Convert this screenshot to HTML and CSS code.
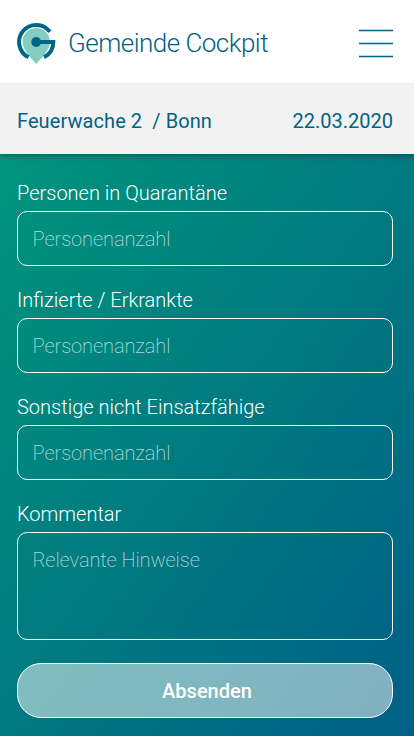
FILE: index.html
```html
<!DOCTYPE html>
<html lang="de">
<head>
  <meta charset="UTF-8">
  <meta name="viewport" content="width=device-width, initial-scale=1.0">
  <title>Gemeinde Cockpit</title>
  <link rel="stylesheet" href="styles.css">
</head>

<body>
<div class="mainscreen">
    <header class="topbar">
      <div class="brand">
        <svg class="logo" width="40" height="42" viewBox="0 0 40 42">
          <path d="M20.200 42 C17.500 38.500 14.500 36 12 32.500 C9 28.500 6.500 24.500 6.500 19.800 A13.700 13.700 0 0 1 33.900 19.800 C33.900 24.500 31.400 28.500 28.400 32.500 C25.900 36 22.900 38.500 20.200 42 Z" fill="#84cdc0"/>
          <path d="M33.900 9.800 A17.100 17.100 0 1 0 12.500 35.300" fill="none" stroke="#006586" stroke-width="4"/>
          <path d="M20.200 20 H37.300 A17.100 17.100 0 0 1 28 35.300" fill="none" stroke="#006586" stroke-width="4"/>
          <circle cx="20.200" cy="20" r="4.900" fill="#006586"/>
        </svg>
        <span class="brandname">Gemeinde Cockpit</span>
      </div>
      <div class="menu">
        <span></span>
        <span></span>
        <span></span>
      </div>
    </header>

    <div class="station">
      <span class="place">Feuerwache 2&nbsp; / Bonn</span>
      <span class="date">22.03.2020</span>
    </div>

    <form class="report">
      <label for="quarantine">Personen in Quarantäne</label>
      <input type="text" class="inputbox" id="quarantine" placeholder="Personenanzahl">
      <label for="infected">Infizierte / Erkrankte</label>
      <input type="text" class="inputbox" id="infected" placeholder="Personenanzahl">
      <label for="other">Sonstige nicht Einsatzfähige</label>
      <input type="text" class="inputbox" id="other" placeholder="Personenanzahl">
      <label for="comment">Kommentar</label>
      <textarea class="inputbox comment" id="comment" placeholder="Relevante Hinweise"></textarea>
      <button type="button" class="button">Absenden</button>
    </form>
</div>
</body>
</html>
```
FILE: styles.css
```css
* {
  box-sizing: border-box;
}

body {
  font-family: Roboto, sans-serif;
  margin: 0;
}

.mainscreen {
  min-height: 100vh;
  display: flex;
  flex-direction: column;
  background: #fff;
  color: #006283;
}

.topbar {
  height: 82px;
  padding: 0 21px 0 16px;
  display: flex;
  align-items: center;
  justify-content: space-between;
}

.brand {
  display: flex;
  align-items: center;
  gap: 12px;
  padding-top: 4px;
}

.logo {
  display: block;
}

.brandname {
  font-size: 26px;
  font-weight: 300;
  letter-spacing: -0.52px;
  line-height: 32px;
  white-space: nowrap;
}

.menu {
  width: 34px;
  display: flex;
  flex-direction: column;
  gap: 10px;
  padding-top: 5px;
}

.menu span {
  height: 3px;
  background: #006586;
  border: solid #b9d9dc;
  border-width: 1px 0;
}

.station {
  position: relative;
  height: 72px;
  padding: 5px 21px 0 17px;
  display: flex;
  align-items: center;
  justify-content: space-between;
  background: #f2f2f2;
  border-top: 1px solid #f9f9f9;
  box-shadow: 0 2px 6px rgba(0, 0, 0, 0.3);
  clip-path: inset(0 0 -12px 0);
  font-size: 20px;
  font-weight: 400;
}

.place {
  letter-spacing: 0.08px;
}

.report {
  flex: 1;
  padding: 27px 21px 18px 17px;
  display: flex;
  flex-direction: column;
  background: linear-gradient(127deg, #00957c 0%, #007a80 50%, #005f86 100%);
  color: #fff;
}

label {
  height: 24px;
  margin-bottom: 6px;
  font-size: 20px;
  font-weight: 300;
  line-height: 24px;
}

.inputbox {
  display: block;
  width: 100%;
  height: 55px;
  margin: 0 0 22px;
  padding: 0 14.5px;
  border: 1px solid #fff;
  border-radius: 10px;
  background: transparent;
  color: #fff;
  font-family: Roboto, sans-serif;
  font-size: 20px;
  font-weight: 200;
  letter-spacing: -0.09px;
  outline: none;
  resize: none;
}

.inputbox::placeholder {
  color: rgba(255, 255, 255, 0.7);
}

.comment {
  height: 108px;
  padding: 15px 14.5px;
  line-height: 24px;
}

.button {
  height: 55px;
  margin-top: 1px;
  padding: 0 0 0 4px;
  border: 1px solid #fff;
  border-radius: 24px;
  background: rgba(255, 255, 255, 0.5);
  color: #fff;
  font-family: Roboto, sans-serif;
  font-size: 20px;
  font-weight: 500;
}
```
